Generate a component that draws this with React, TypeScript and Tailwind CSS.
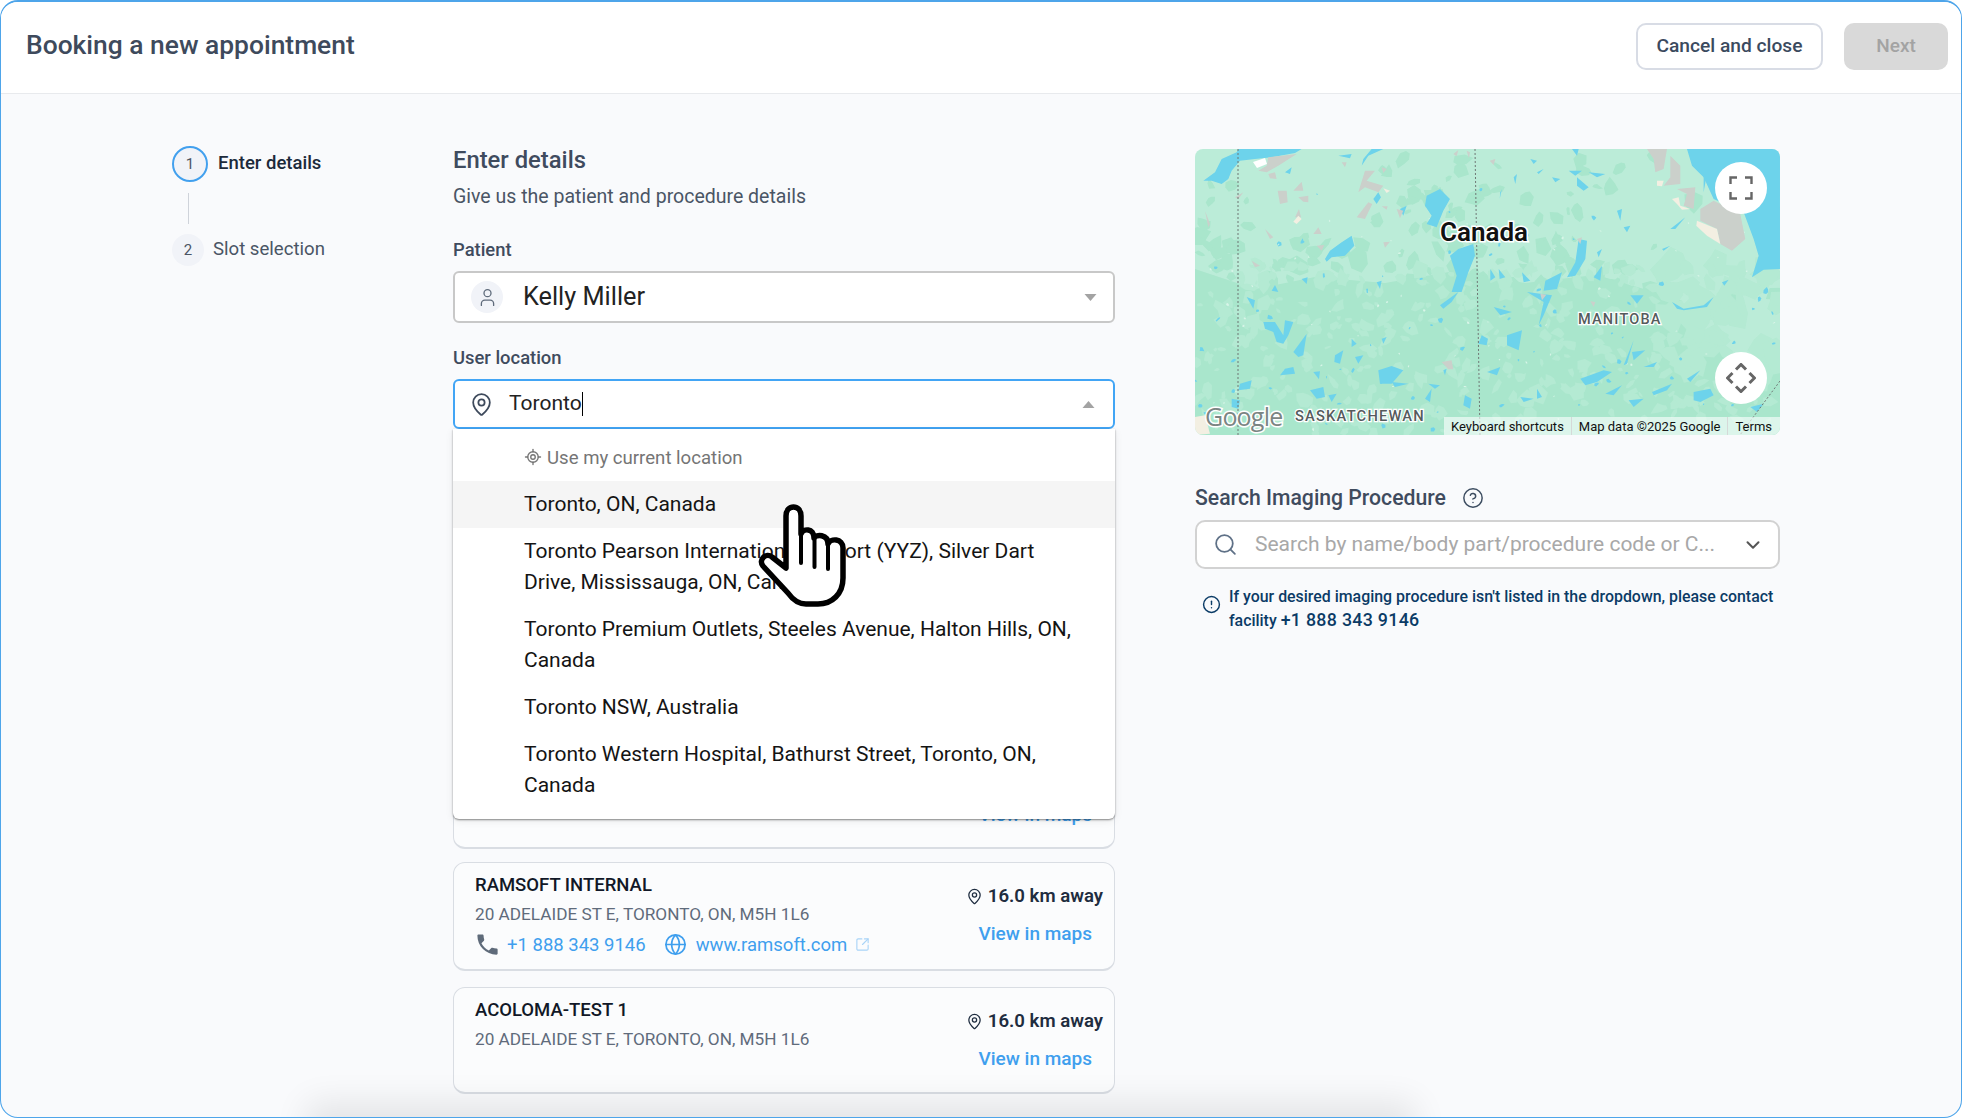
import { ChevronDown, CircleAlert, CircleHelp, Globe, LocateFixed, MapPin, Search, SquareArrowOutUpRight, User } from "lucide-react";
import { MdPhone } from "react-icons/md";

const WATER = "#6dd3eb";
const LIGHT = "#bbecd8";
const DARK = "#a9e6cc";
const GRAY = "#cbd0cb";
const CREAM = "#f3efe2";

// seeded so the map comes out the same on every load
const makeRandom = (seed: number) => () => {
  seed = (seed + 0x6d2b79f5) | 0;
  let t = Math.imul(seed ^ (seed >>> 15), 1 | seed);
  t = (t + Math.imul(t ^ (t >>> 7), 61 | t)) ^ t;
  return ((t ^ (t >>> 14)) >>> 0) / 4294967296;
};

const blob = (r: () => number, cx: number, cy: number, size: number) => {
  const sides = 5 + Math.floor(r() * 4);
  const tilt = r() * 3;
  const stretch = 0.4 + r() * 0.6;
  const pts: string[] = [];
  for (let i = 0; i < sides; i++) {
    const a = (i / sides) * Math.PI * 2;
    const d = size * (0.55 + r() * 0.65);
    const x = Math.cos(a) * d;
    const y = Math.sin(a) * d * stretch;
    pts.push(`${(cx + x * Math.cos(tilt) - y * Math.sin(tilt)).toFixed(1)},${(cy + x * Math.sin(tilt) + y * Math.cos(tilt)).toFixed(1)}`);
  }
  return pts.join(" ");
};

const buildPatches = () => {
  const r = makeRandom(41);
  const darkOnLight: string[] = [];
  const lightOnDark: string[] = [];
  const flecks: string[] = [];
  const specks: string[] = [];
  for (let i = 0; i < 520; i++) {
    const x = r() * 585;
    const y = r() * 160;
    let weight = 0.08 + (y / 160) * 0.6;
    if (x < 40) weight += 0.35;
    if (x > 200 && x < 280 && y < 60) weight += 0.2;
    if (x > 430 && y < 130) weight = 0.04;
    if (x > 60 && x < 170 && y < 90) weight = 0.02;
    if (r() < weight) darkOnLight.push(blob(r, x, y, 4 + r() * 9));
  }
  for (let i = 0; i < 420; i++) {
    const x = r() * 585;
    const y = 115 + r() * 171;
    const large = x > 470 && y < 230;
    lightOnDark.push(blob(r, x, y, (large ? 9 : 3) + r() * (large ? 12 : 7)));
  }
  for (let i = 0; i < 170; i++) {
    const x = r() * 585;
    const y = 40 + r() * 246;
    if (x > 470 && y < 130) continue;
    if (r() < 0.15 + y / 420) flecks.push(blob(r, x, y, 1 + r() * 2.4));
  }
  for (let i = 0; i < 70; i++) {
    specks.push(blob(r, r() * 585, 60 + r() * 226, 0.8 + r()));
  }
  return { darkOnLight, lightOnDark, flecks, specks };
};

const patches = buildPatches();

// outlines below are in 3x crop coordinates, one list per map quadrant
const quadrants: { tx: number; ty: number; water: string[]; gray: string[]; cream: string[] }[] = [
  {
    tx: 0,
    ty: 0,
    water: [
      "25,95 60,70 80,30 125,10 130,0 320,0 300,12 230,25 180,30 135,35 110,65 100,90 80,105 50,95",
      "695,140 735,120 765,150 745,185 725,235 695,225 710,200 690,170",
      "765,320 790,300 835,285 840,320 820,370 800,429 770,429 785,380",
      "390,330 405,305 440,280 470,260 478,290 450,320 410,325 395,338",
      "535,150 550,130 558,145 545,165",
      "500,50 520,20 565,0 530,0 505,30",
      "270,70 290,55 285,75",
      "430,20 470,15 465,28",
      "615,180 635,170 625,200",
      "545,400 560,395 555,420",
      "320,390 338,385 335,405",
      "230,425 240,408 250,429",
    ],
    gray: [
      "190,65 215,50 220,25 305,15 250,50 215,70",
      "220,75 240,70 245,90 225,88",
      "490,130 510,65 540,65 515,95 565,110 550,130 510,115",
      "485,205 520,160 532,165 510,210",
      "248,125 275,125 278,160 255,165",
      "295,125 320,98 325,125",
      "310,145 340,140 340,160 325,158",
      "300,205 312,180 318,205",
      "210,240 235,265 225,270",
      "355,255 370,235 380,255",
      "365,290 388,288 380,305",
      "170,335 195,350 180,355",
      "30,185 45,225 40,235",
      "120,145 145,130 130,150",
      "605,180 625,185 615,208",
      "560,172 578,172 575,182",
      "560,55 575,60 565,72",
      "440,40 455,40 450,55",
      "565,280 585,278 570,296",
      "815,5 825,10 822,28",
      "775,15 790,3 785,22",
    ],
    cream: ["295,218 310,200 320,210 305,225", "565,118 585,125 575,132"],
  },
  {
    tx: 292,
    ty: 0,
    water: [
      "600,0 879,0 879,360 830,362 795,385 815,320 800,270 770,190 680,150 650,85 615,50",
      "270,85 305,115 290,125 270,110",
      "245,65 285,65 265,80",
      "305,70 355,75 330,85",
      "265,340 275,270 300,275 295,330 265,380 240,385",
      "175,395 225,370 210,420 170,425",
      "105,370 130,395 110,400",
      "390,185 405,180 400,215",
      "410,235 430,230 420,250",
      "550,240 595,205 565,240",
      "525,300 550,290 530,305",
      "80,85 90,75 85,105",
      "195,85 220,90 205,100",
      "150,70 170,60 155,75",
      "255,0 275,0 270,20",
      "650,80 658,85 650,130",
      "130,30 150,35 140,45",
      "40,130 45,120 38,150",
      "330,310 345,300 335,325",
      "705,400 725,392 712,410",
      "10,360 25,385 10,395",
      "35,360 55,385 38,390",
      "320,385 345,350 340,395",
    ],
    gray: [
      "480,0 540,0 530,60 505,70 500,30",
      "550,20 580,50 580,105 530,110 550,85",
      "570,120 625,115 620,180 590,170 600,135",
      "640,180 680,155 760,195 775,270 735,305 700,285 690,240 640,215",
      "270,270 285,265 280,285",
      "8,35 25,30 20,48",
    ],
    cream: [
      "630,215 690,240 700,285 660,260 628,230",
      "555,150 575,145 580,170 610,180 585,182 570,165",
      "510,95 530,95 525,112 510,110",
    ],
  },
  {
    tx: 0,
    ty: 143,
    water: [
      "205,90 240,90 265,130 270,85 295,90 280,130 265,155 245,150 235,120 210,110",
      "550,235 590,222 625,235 590,275 555,275",
      "345,295 385,285 390,315 365,320",
      "400,310 425,305 410,330",
      "135,275 170,265 165,290 130,295",
      "110,320 135,325 130,350 110,345",
      "420,190 445,175 435,215 418,210",
      "270,230 295,225 300,245 255,250",
      "590,270 640,275 600,285",
      "690,320 710,290 705,330",
      "810,310 830,320 825,350 805,340",
      "470,140 485,155 470,165",
      "735,40 790,0 770,30 745,50",
      "155,15 180,25 175,50",
      "295,180 335,125 325,190 310,195",
      "480,195 505,190 490,215",
      "560,140 575,135 565,155",
      "860,130 879,140 875,160 850,155",
      "745,235 755,230 750,250",
      "355,240 375,238 372,262",
      "700,275 735,280 720,290",
    ],
    gray: ["740,210 770,205 775,232 760,232"],
    cream: ["0,375 30,370 45,425 0,429"],
  },
  {
    tx: 292,
    ty: 143,
    water: [
      "555,30 590,50 650,40 680,15 660,45 590,55 570,50",
      "280,260 350,235 375,240 330,270 295,280",
      "495,300 555,275 540,295 500,310",
      "620,300 670,290 680,310 640,330 620,325",
      "600,260 640,235 610,270",
      "470,225 510,210 500,225",
      "410,220 440,145 420,215",
      "435,180 475,175 440,205",
      "355,305 405,280 380,310",
      "0,240 40,225 30,250",
      "60,130 105,115 95,175 60,160",
      "120,0 195,10 170,70 155,100 170,30",
      "430,10 470,10 450,35",
      "100,315 140,320 110,330",
      "150,290 165,315 150,320",
      "790,345 830,335 810,360",
      "20,45 75,60 40,70",
      "425,325 470,320 440,345",
    ],
    gray: ["310,28 325,30 320,45", "160,5 178,8 165,25"],
    cream: [],
  },
];

const MapArt = () => (
  <svg viewBox="0 0 585 286" className="block h-full w-full">
    <defs>
      <filter id="soften" x="0" y="0" width="100%" height="100%">
        <feGaussianBlur stdDeviation="0.6" />
      </filter>
    </defs>
    <rect width="585" height="286" fill={LIGHT} />
    <g filter="url(#soften)">
      {patches.darkOnLight.map((p, i) => (
        <polygon key={i} points={p} fill={DARK} />
      ))}
      <polygon
        points="0,120 60,140 120,128 190,134 260,122 330,134 400,126 470,146 520,200 585,215 585,286 0,286"
        fill={DARK}
      />
      {patches.lightOnDark.map((p, i) => (
        <polygon key={i} points={p} fill="#b4ead3" />
      ))}
      {patches.flecks.map((p, i) => (
        <polygon key={i} points={p} fill={WATER} />
      ))}
      {patches.specks.map((p, i) => (
        <polygon key={i} points={p} fill="#d8f5e8" />
      ))}
      {quadrants.map((q, i) => (
        <g key={i} transform={`translate(${q.tx} ${q.ty}) scale(0.3333)`}>
          {q.water.map((p, k) => (
            <polygon key={k} points={p} fill={WATER} />
          ))}
          {q.gray.map((p, k) => (
            <polygon key={k} points={p} fill={GRAY} />
          ))}
          {q.cream.map((p, k) => (
            <polygon key={k} points={p} fill={CREAM} />
          ))}
        </g>
      ))}
      <polygon points="58,13 70,9 72,15 62,19" fill="#ffffff" />
    </g>
    <line x1="43" y1="0" x2="43" y2="286" stroke="#6f7775" strokeWidth="1" strokeDasharray="2 2" />
    <line x1="280" y1="0" x2="285" y2="286" stroke="#6f7775" strokeWidth="1" strokeDasharray="2 2" />
    <line x1="585" y1="232" x2="545" y2="286" stroke="#6f7775" strokeWidth="1" strokeDasharray="2 2" />
    <text
      x="245"
      y="92"
      fontFamily="Roboto, sans-serif"
      fontSize="26"
      fontWeight="600"
      fill="#111111"
      stroke="#ffffff"
      strokeWidth="3"
      paintOrder="stroke"
    >
      Canada
    </text>
    <text
      x="383"
      y="175"
      fontFamily="Roboto, sans-serif"
      fontSize="14.5"
      fontWeight="500"
      letterSpacing="1.2"
      fill="#555b5c"
      stroke="#ffffff"
      strokeWidth="2.5"
      paintOrder="stroke"
    >
      MANITOBA
    </text>
    <text
      x="100"
      y="272"
      fontFamily="Roboto, sans-serif"
      fontSize="14.7"
      fontWeight="500"
      letterSpacing="1.2"
      fill="#555b5c"
      stroke="#ffffff"
      strokeWidth="2.5"
      paintOrder="stroke"
    >
      SASKATCHEWAN
    </text>
    <text
      x="10"
      y="277"
      fontFamily="'Open Sans', sans-serif"
      fontSize="25"
      fontWeight="500"
      letterSpacing="-0.8"
      fill="#7b8583"
      stroke="#ffffff"
      strokeWidth="3"
      paintOrder="stroke"
    >
      Google
    </text>
  </svg>
);

const FullscreenIcon = () => (
  <svg viewBox="0 0 24 24" className="h-[24px] w-[24px]" fill="none" stroke="#666666" strokeWidth="2.4">
    <path d="M1.5 8V1.5H8M16 1.5h6.5V8M22.5 16v6.5H16M8 22.5H1.5V16" />
  </svg>
);

const MoveIcon = () => (
  <svg viewBox="0 0 30 30" className="h-[30px] w-[30px]" fill="none" stroke="#666666" strokeWidth="3">
    <path d="M10 6.5l5-5 5 5M10 23.5l5 5 5-5M6.5 10l-5 5 5 5M23.5 10l5 5-5 5" />
  </svg>
);

const HandCursor = () => (
  <svg viewBox="0 0 130 130" className="pointer-events-none absolute left-[287px] top-[111px] z-20 h-[130px] w-[130px]">
    <path
      d="M46 78 L46 26 C46 14 61 14 61 26 L61 44 C63 38 74 38 74 48 C76 44 88 44 88 54 C90 48 103 48 103 58 L103 88 C103 104 92 114 78 114 L66 114 C58 114 53 110 48 103 L23 76 C18 70 26 62 32 67 Z"
      fill="#ffffff"
      stroke="#000000"
      strokeWidth="5.5"
      strokeLinejoin="round"
    />
    <path d="M61 42V73M74.5 47V77M88 54V79" fill="none" stroke="#000000" strokeWidth="4" strokeLinecap="round" />
  </svg>
);

const Caret = ({ up }: { up?: boolean }) => (
  <svg viewBox="0 0 12 7" className="h-[7px] w-[13px]">
    <path d={up ? "M0 7L6 0l6 7z" : "M0 0l6 7 6-7z"} fill="#a3a3a3" />
  </svg>
);

const places = [
  "Toronto, ON, Canada",
  "Toronto Pearson International Airport (YYZ), Silver Dart Drive, Mississauga, ON, Canada",
  "Toronto Premium Outlets, Steeles Avenue, Halton Hills, ON, Canada",
  "Toronto NSW, Australia",
  "Toronto Western Hospital, Bathurst Street, Toronto, ON, Canada",
];

const LocationMenu = () => (
  <div className="absolute left-0 top-full z-10 w-full rounded-b-md bg-white pb-[10px] shadow-[0_1px_2px_rgba(0,0,0,0.45),0_2px_8px_rgba(0,0,0,0.08)]">
    <div className="flex h-[52px] items-center pl-[71px] pt-[8px] text-[18.6px] text-[#757575]">
      <LocateFixed className="mb-1 mr-[5px] h-[18px] w-[18px]" strokeWidth={1.8} />
      Use my current location
    </div>
    {places.map((place, i) => (
      <div key={place} className={`py-2 pl-[71px] pr-[30px] text-[21px] leading-[31px] text-[#141414] ${i === 0 ? "bg-[#f5f5f5]" : ""}`}>
        {place}
      </div>
    ))}
  </div>
);

const FacilityCard = ({
  name,
  address,
  size,
  contact,
}: {
  name?: string;
  address?: string;
  size: string;
  contact?: boolean;
}) => (
  <div className={`flex justify-between rounded-xl border border-b-2 border-[#d9dde3] bg-[#fbfcfd] pl-[21px] pr-[11px] ${size}`}>
    <div className="pt-[10px] leading-6">
      <div className="text-[18.5px] font-medium text-[#111827]">{name}</div>
      <div className="mt-[5px] text-[17.2px] text-[#5f6b7b]">{address}</div>
      {contact && (
        <div className="mt-[5px] flex items-center text-[18.5px] text-[#3f9fee]">
          <MdPhone className="ml-[-1px] h-[27px] w-[27px] text-[#5f6b7a]" />
          <span className="ml-[6px]">+1 888 343 9146</span>
          <Globe className="ml-[18px] h-[23px] w-[23px]" strokeWidth={1.8} />
          <span className="ml-[9px]">www.ramsoft.com</span>
          <SquareArrowOutUpRight className="ml-2 h-[15px] w-[15px] text-[#a9d4f7]" strokeWidth={1.8} />
        </div>
      )}
    </div>
    <div className="flex flex-col items-end pt-[21px] leading-6">
      {name && (
        <div className="flex items-center text-[18.6px] font-semibold text-[#1f2d40]">
          <MapPin className="mr-[5px] h-[17px] w-[17px]" strokeWidth={1.8} />
          16.0 km away
        </div>
      )}
      <div className={`mr-[11px] text-[19px] font-medium text-[#3f9fee] ${name ? "mt-[14px]" : "mt-[38px]"}`}>View in maps</div>
    </div>
  </div>
);

const Stepper = () => (
  <div className="-mt-[2px] w-[281px]">
    <div className="flex items-center">
      <div className="flex h-[36px] w-[36px] items-center justify-center rounded-full border-[2.5px] border-[#42a0ee] bg-[#f1f3f8] text-[15px] text-[#4b5563]">
        1
      </div>
      <span className="ml-[10px] text-[18.5px] font-medium text-[#1c2a3b]">Enter details</span>
    </div>
    <div className="ml-[16px] mt-[11px] h-[31px] w-px bg-[#cfd3da]" />
    <div className="mt-[10px] flex items-center">
      <div className="flex h-[32px] w-[32px] items-center justify-center rounded-full bg-[#f1f3f8] text-[15px] text-[#4b5563]">2</div>
      <span className="ml-[9px] text-[18.6px] text-[#4a5565]">Slot selection</span>
    </div>
  </div>
);

const App = () => {
  return (
    <div className="relative h-[1118px] w-full overflow-hidden rounded-[18px] border border-t-2 border-[#4ea5ea] bg-[#f9fafc] [font-family:Roboto,sans-serif]">
      <header className="flex h-[92px] items-center justify-between border-b border-[#e8eaed] bg-white pb-[3px] pl-[25px] pr-[13px]">
        <h1 className="text-[26.4px] font-medium text-[#3e4a5c]">Booking a new appointment</h1>
        <div className="flex gap-[21px]">
          <button className="h-[47px] w-[187px] rounded-[10px] border-2 border-[#d8dce5] bg-white text-[19.2px] font-medium text-[#3b4a5e]">
            Cancel and close
          </button>
          <button className="h-[47px] w-[104px] rounded-[10px] bg-[#d9d9d9] text-[19px] font-medium text-[#a3a3a3]">Next</button>
        </div>
      </header>

      <main className="flex pl-[171px] pt-[54px]">
        <Stepper />

        <section className="w-[662px]">
          <h2 className="text-[23.8px] font-medium leading-6 text-[#3f4b5e]">Enter details</h2>
          <p className="mt-[13px] text-[19.5px] leading-6 text-[#4a5565]">Give us the patient and procedure details</p>

          <label className="mt-[29px] block text-[18.4px] font-medium leading-6 text-[#3f4b5e]">Patient</label>
          <div className="mt-[9px] flex h-[52px] items-center rounded-md border-2 border-[#c8c8c8] bg-white pl-[16px] pr-[16px]">
            <div className="flex h-[32px] w-[32px] items-center justify-center rounded-full bg-[#f1f3f8]">
              <User className="h-[21px] w-[21px] text-[#5f6b7b]" strokeWidth={1.5} />
            </div>
            <span className="ml-[20px] flex-1 text-[25.3px] text-[#222222]">Kelly Miller</span>
            <Caret />
          </div>

          <label className="mt-[23px] block text-[18.4px] font-medium leading-6 text-[#3f4b5e]">User location</label>
          <div className="relative mt-[9px]">
            <div className="flex h-[50px] items-center rounded-md border-[2.5px] border-[#42a5f5] bg-white pl-[14px] pr-[18px]">
              <MapPin className="h-[25px] w-[25px] text-[#3e4a5c]" strokeWidth={1.7} />
              <span className="ml-[15px] text-[21px] text-[#222222]">Toronto</span>
              <span className="h-[24px] w-px bg-black" />
              <span className="flex-1" />
              <Caret up />
            </div>
            <LocationMenu />
            <HandCursor />
          </div>

          <div className="mt-[314px] flex flex-col gap-4">
            <FacilityCard size="h-[106px] -mb-[3px]" />
            <FacilityCard size="h-[109px]" name="RAMSOFT INTERNAL" address="20 ADELAIDE ST E, TORONTO, ON, M5H 1L6" contact />
            <FacilityCard size="h-[107px]" name="ACOLOMA-TEST 1" address="20 ADELAIDE ST E, TORONTO, ON, M5H 1L6" />
          </div>
        </section>

        <aside className="ml-[80px] mt-px w-[585px]">
          <div className="relative h-[286px] overflow-hidden rounded-lg">
            <MapArt />
            <button className="absolute right-[13px] top-[13px] flex h-[52px] w-[52px] items-center justify-center rounded-full bg-white">
              <FullscreenIcon />
            </button>
            <button className="absolute right-[13px] top-[203px] flex h-[52px] w-[52px] items-center justify-center rounded-full bg-white">
              <MoveIcon />
            </button>
            <div className="absolute bottom-0 right-0 flex h-[18px] items-center bg-white/60 text-[13px] leading-none text-[#111111]">
              <span className="px-[7px]">Keyboard shortcuts</span>
              <span className="h-full w-px bg-[#d5d9d8]" />
              <span className="px-[7px]">Map data ©2025 Google</span>
              <span className="h-full w-px bg-[#d5d9d8]" />
              <span className="pl-[7px] pr-[8px]">Terms</span>
            </div>
          </div>

          <div className="mt-[51px] flex items-center">
            <span className="text-[21.2px] font-medium leading-6 text-[#3f4b5e]">Search Imaging Procedure</span>
            <CircleHelp className="ml-[16px] h-[22px] w-[22px] text-[#3d4d61]" strokeWidth={1.6} />
          </div>
          <div className="mt-[10px] flex h-[49px] items-center rounded-[10px] border-2 border-[#d2d2d2] bg-white pl-[16px] pr-[14px]">
            <Search className="h-[25px] w-[25px] text-[#5f7187]" strokeWidth={1.7} />
            <span className="ml-[17px] min-w-0 flex-1 truncate text-[21px] text-[#a8a8a8]">
              Search by name/body part/procedure code or C...
            </span>
            <ChevronDown className="ml-3 h-[22px] w-[22px] text-[#555555]" strokeWidth={2.2} />
          </div>
          <div className="mt-4 flex pl-[7px]">
            <CircleAlert className="mt-[10px] h-[19px] w-[19px] shrink-0 text-[#0b3b66]" strokeWidth={1.8} />
            <p className="ml-[8px] text-[15.9px] font-medium leading-[23px] text-[#0b3b66]">
              If your desired imaging procedure isn't listed in the dropdown, please contact facility{" "}
              <span className="text-[17.8px] tracking-[0.3px]">+1 888 343 9146</span>
            </p>
          </div>
        </aside>
      </main>

      <div className="pointer-events-none absolute -bottom-[30px] left-[320px] h-[30px] w-[1080px] shadow-[0_0_34px_14px_rgba(0,0,0,0.09)]" />
    </div>
  );
};

export default App;
